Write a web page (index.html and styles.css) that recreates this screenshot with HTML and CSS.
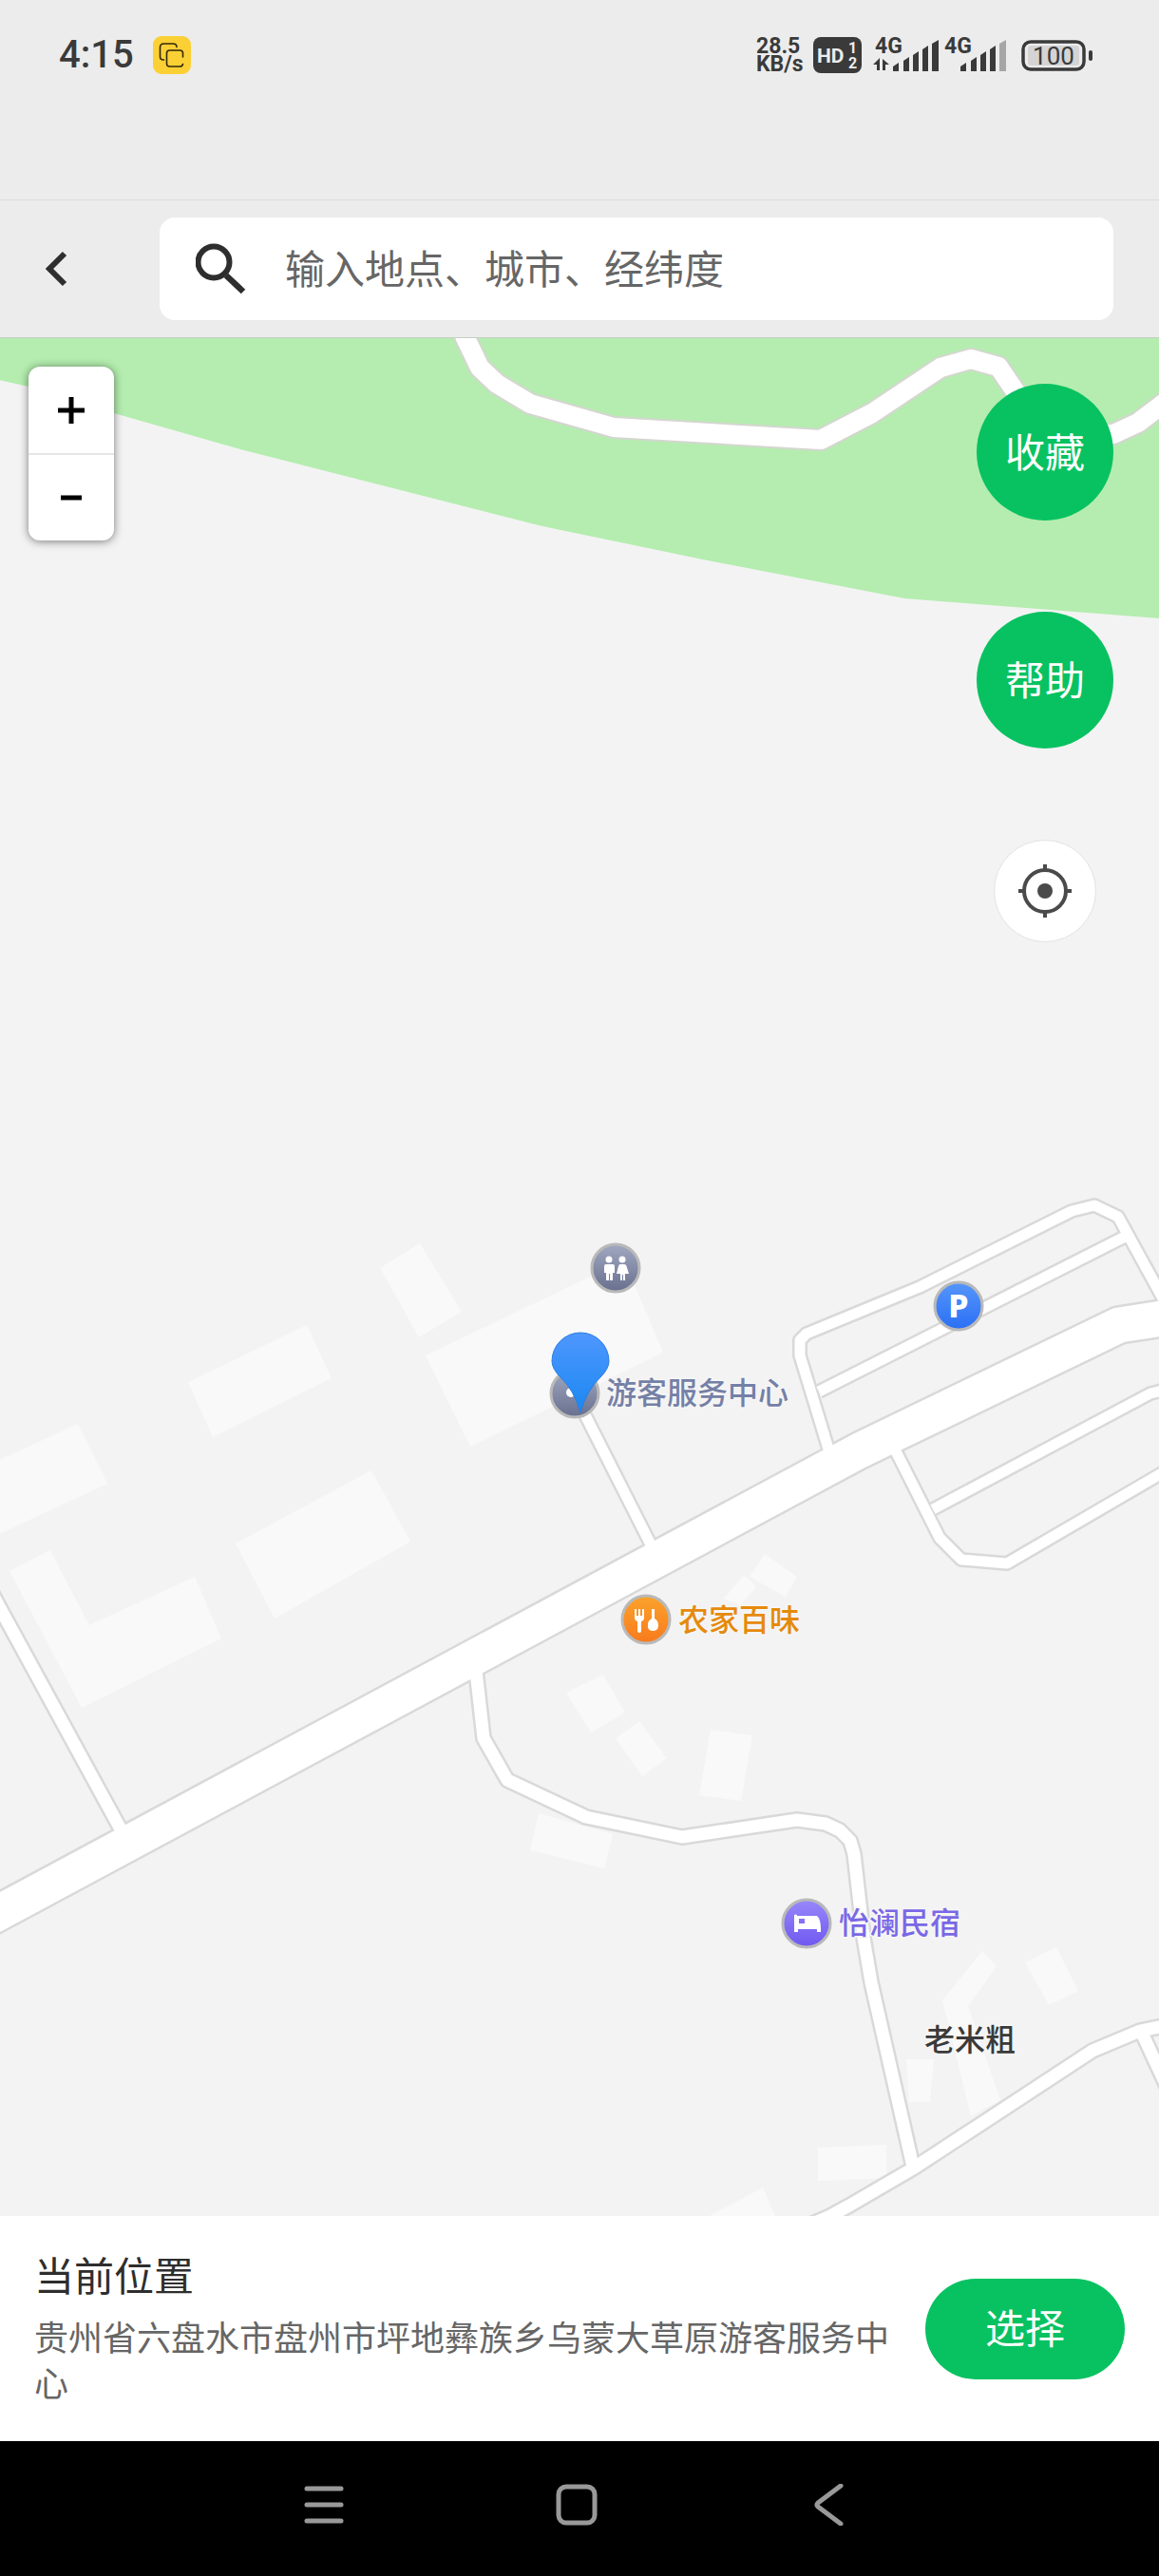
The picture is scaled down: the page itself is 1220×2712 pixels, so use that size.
FILE: index.html
```html
<!DOCTYPE html>
<html lang="zh-CN">
<head>
<meta charset="utf-8">
<meta name="viewport" content="width=device-width, initial-scale=1">
<title>选择位置</title>
<link rel="stylesheet" href="styles.css">
</head>
<body>
<div class="screen">
  <div class="status-bar">
    <div class="status-left">
      <span class="clock">4:15</span>
      <svg class="copy-badge" width="40" height="40" viewBox="0 0 40 40" aria-hidden="true">
        <rect width="40" height="40" rx="9" fill="#fbd034"/>
        <g fill="none" stroke="#33290a" stroke-width="1.6" stroke-linecap="round">
          <path d="M11.500 25H11q-3.500 0-3.500-3.500V12q0-4 4-4h9.500q4 0 4 3.500"/>
          <path d="M31.500 22V18q0-3-3-3H17.500q-3 0-3 3v11q0 3 3 3h11q2.500 0 3-2.500"/>
        </g>
      </svg>
    </div>
    <div class="status-right">
      <div class="speed"><span>28.5</span><span>KB/s</span></div>
      <svg class="hd" width="51" height="38" viewBox="0 0 51 38">
        <rect width="51" height="38" rx="8" fill="#3a3a3a"/>
        <text x="4" y="27" font-size="21">HD</text>
        <text x="37" y="17" font-size="16">1</text>
        <text x="37" y="33" font-size="16">2</text>
      </svg>
      <svg class="signal" width="69" height="48" viewBox="0 -5 69 48">
        <text x="2" y="17" font-size="23">4G</text>
        <path d="M0 29l7-7v13H4v-6zM17 29l-7-6v12h3v-6z"/>
        <path d="M21 36v-5l6-4v9zM32 36V25l6-4v15zM42 36V19l6-4v21zM52 36V13l6-4v27zM62 36V7l7-4v33z"/>
      </svg>
      <svg class="signal" width="65" height="48" viewBox="0 -5 65 48">
        <text x="0" y="17" font-size="23">4G</text>
        <path d="M17 36v-5l6-4v9zM28 36V25l6-4v15zM38 36V19l6-4v21zM48 36V13l6-4v27z"/>
        <path class="weak" d="M58 36V7l7-4v33z"/>
      </svg>
      <svg class="battery" width="75" height="34" viewBox="0 0 75 34">
        <rect x="2" y="3" width="64" height="29" rx="8" fill="none" stroke="#3a3a3a" stroke-width="3.500"/>
        <rect x="7" y="7" width="54" height="21" rx="3" fill="#d4d4d4"/>
        <rect x="71" y="12" width="4" height="11" rx="2"/>
        <text x="34" y="27" font-size="26" text-anchor="middle">100</text>
      </svg>
    </div>
  </div>

  <header class="search-bar">
    <button class="back" type="button" aria-label="返回">
      <svg width="24" height="38" viewBox="0 0 24 38"><path d="M20 3L4 19l16 16" fill="none" stroke="#2e2e2e" stroke-width="6"/></svg>
    </button>
    <label class="search">
      <svg width="54" height="54" viewBox="0 0 54 54" aria-hidden="true"><g fill="none" stroke="#2e2e2e"><circle cx="19" cy="20" r="16.500" stroke-width="6"/><path d="M32 34l18 17" stroke-width="6.500"/></g></svg>
      <input type="search" placeholder="输入地点、城市、经纬度" aria-label="搜索地点">
    </label>
  </header>

  <main class="map">
    <svg class="map-canvas" viewBox="0 356 1220 1977" preserveAspectRatio="xMidYMid slice">
      <defs>
        <linearGradient id="slate" x2="0" y2="1"><stop offset="0" stop-color="#a1a8c0"/><stop offset="1" stop-color="#68708f"/></linearGradient>
        <linearGradient id="blue" x2="0" y2="1"><stop offset="0" stop-color="#5596fa"/><stop offset="1" stop-color="#2b6ff5"/></linearGradient>
        <linearGradient id="orange" x2="0" y2="1"><stop offset="0" stop-color="#fba32c"/><stop offset="1" stop-color="#f87a1c"/></linearGradient>
        <linearGradient id="violet" x2="0" y2="1"><stop offset="0" stop-color="#9788fa"/><stop offset="1" stop-color="#6f58f0"/></linearGradient>
        <linearGradient id="pin" x2="0" y2="1"><stop offset="0" stop-color="#4f97ff"/><stop offset="1" stop-color="#1a88f0"/></linearGradient>
        <path id="main-road" d="M-30 2029L905 1527L1178 1395L1250 1384"/>
        <g id="lanes">
          <path d="M606 1470L692 1640"/>
          <path d="M878 1545L842 1427V1411L849 1404L968 1355L1128 1275L1152 1269L1177 1281L1240 1396"/>
          <path d="M862 1465L1184 1302"/>
          <path d="M938 1518L989 1619L1012 1642L1060 1646L1240 1541"/>
          <path d="M982 1589L1211 1467L1240 1460"/>
        </g>
        <g id="streets">
          <path d="M-20 1656L0 1693L132 1935"/>
          <path d="M500 1750L509 1830L534 1874L617 1913L718 1934L839 1916L869 1920L884 1927L895 1938L899 1952L909 2040L917 2087L961 2281"/>
          <path d="M830 2352L874 2333L894 2322L961 2283L1150 2159L1200 2138L1240 2130"/>
          <path d="M1201 2138L1240 2222"/>
        </g>
        <path id="park-road" d="M484 340L490 356L505 387L523 404L558 425L646 450L864 463L918 435L990 387L1022 378L1051 386L1068 411L1090 440L1130 460L1172 457L1198 445L1240 413"/>
      </defs>
      <path class="park" d="M-10 340V398L30 407L120 435L253 473L571 554L740 589L952 630L1220 651L1240 652V340z"/>
      <use href="#park-road" class="park-casing"/>
      <use href="#park-road" class="park-fill"/>
      <g class="buildings">
        <path d="M448 1427L657 1327L698 1424L495 1523z"/>
        <path d="M400 1335L442 1309L486 1381L441 1408z"/>
        <path d="M198 1455L323 1395L349 1451L224 1513z"/>
        <path d="M-20 1546L82 1499L113 1562L-20 1624z"/>
        <path d="M248 1625L391 1548L432 1623L289 1704z"/>
        <path d="M10 1654L53 1632L94 1711L205 1660L233 1725L86 1798z"/>
        <path d="M805 1636L839 1660L827 1681L789 1660z"/>
        <path d="M783 1658L796 1670L780 1690L762 1683z"/>
        <path d="M596 1782L635 1763L658 1803L622 1824z"/>
        <path d="M648 1830L673 1812L702 1851L676 1870z"/>
        <path d="M748 1821L792 1827L780 1896L736 1890z"/>
        <path d="M567 1909L645 1931L636 1967L558 1948z"/>
        <path d="M1079 2066L1112 2050L1135 2096L1104 2111z"/>
        <path d="M1034 2054L1049 2070L1019 2112L1053 2211L1022 2228L992 2106z"/>
        <path d="M954 2168H983L979 2213H957z"/>
        <path d="M861 2261L933 2258V2293L861 2296z"/>
        <path d="M730 2342L803 2303L820 2342z"/>
      </g>
      <g class="casing">
        <use href="#lanes" stroke-width="16"/>
        <use href="#streets" stroke-width="18"/>
        <use href="#main-road" stroke-width="42"/>
      </g>
      <g class="fill">
        <use href="#lanes" stroke-width="11"/>
        <use href="#streets" stroke-width="13"/>
        <use href="#main-road" stroke-width="37"/>
      </g>

      <g class="poi">
        <circle cx="648" cy="1335" r="25" fill="url(#slate)"/>
        <g fill="#fff">
          <circle cx="641" cy="1326" r="3.500"/><circle cx="655" cy="1326" r="3.500"/>
          <path d="M638 1331h7q2 0 2 2v7h-2v8h-3v-7h-1v7h-3v-8h-2v-7q0-2 2-2zM653 1331h4q2 0 2.500 2l2.500 8h-4v7h-2v-6h-1v6h-2v-7h-4l2-8q.5-2 2-2z"/>
        </g>
        <circle cx="1009" cy="1375" r="25" fill="url(#blue)"/>
        <text class="poi-letter" x="1009" y="1387" text-anchor="middle">P</text>
        <circle cx="605" cy="1467" r="25" fill="url(#slate)"/>
        <circle cx="601" cy="1466" r="5" fill="#fff"/>
        <circle cx="680" cy="1705" r="25" fill="url(#orange)"/>
        <path fill="#fff" d="M668 1694h2v7h2v-7h2v7h2v-7h2v9q0 3-3 4v10q0 2-2 2t-2-2v-10q-3-1-3-4zM686 1694h3v10q4 2 4 7 0 6-6 6t-5-7q0-4 4-6z"/>
        <circle cx="849" cy="2025" r="25" fill="url(#violet)"/>
        <path fill="#fff" fill-rule="evenodd" d="M836 2016q1.500-1 3 0v1h21q4 3 4 14v3h-4v-3h-20v3h-4zM841 2020v5h6v-5z"/>
      </g>
      <path class="pin" d="M611 1487Q604 1463 590 1450Q581 1441 581 1433A30 30 0 0 1 641 1433Q641 1441 632 1450Q618 1463 611 1487z"/>
      <g class="labels">
        <text x="638" y="1478" fill="#7580a6">游客服务中心</text>
        <text x="714" y="1717" fill="#e58a0c">农家百味</text>
        <text x="883" y="2036" fill="#7a68e6">怡澜民宿</text>
        <text x="973" y="2159" fill="#3a3a3a">老米粗</text>
      </g>
    </svg>

    <div class="zoom-control">
      <button type="button" aria-label="放大"><svg width="28" height="28" viewBox="0 0 28 28"><path d="M0 14h28M14 0v28" stroke="#000" stroke-width="5"/></svg></button>
      <button type="button" aria-label="缩小"><svg width="28" height="28" viewBox="0 0 28 28"><path d="M3 14h22" stroke="#000" stroke-width="5"/></svg></button>
    </div>
    <div class="map-actions">
      <button class="round" type="button">收藏</button>
      <button class="round" type="button">帮助</button>
      <button class="locate" type="button" aria-label="定位">
        <svg width="56" height="56" viewBox="0 0 56 56"><g fill="none" stroke="#4a4a4a" stroke-width="4"><circle cx="28" cy="28" r="22"/><path d="M28 0v8M28 48v8M0 28h8M48 28h8"/></g><circle cx="28" cy="28" r="8" fill="#4a4a4a"/></svg>
      </button>
    </div>
  </main>

  <section class="place">
    <div class="place-text">
      <h1>当前位置</h1>
      <p>贵州省六盘水市盘州市坪地彝族乡乌蒙大草原游客服务中心</p>
    </div>
    <button class="choose" type="button">选择</button>
  </section>

  <nav class="system-nav">
    <button type="button" aria-label="最近任务"><svg width="44" height="44" viewBox="0 0 44 44"><path d="M4 5h36M4 22h36M4 39h36"/></svg></button>
    <button type="button" aria-label="主屏幕"><svg width="44" height="44" viewBox="0 0 44 44"><rect x="3" y="3" width="38" height="38" rx="8"/></svg></button>
    <button type="button" aria-label="返回上一级"><svg width="44" height="44" viewBox="0 0 44 44"><path d="M34 2L10 20q-2 2 0 4l24 18"/></svg></button>
  </nav>
</div>
</body>
</html>
```

FILE: styles.css
```css
* {
  box-sizing: border-box;
}

body {
  margin: 0;
  font-family: "Noto Sans", "Noto Sans CJK SC", sans-serif;
  color: #2e2e2e;
  background: #ececec;
}

button {
  display: flex;
  align-items: center;
  justify-content: center;
  margin: 0;
  padding: 0;
  border: 0;
  background: none;
  font-family: inherit;
  cursor: pointer;
}

svg {
  display: block;
}

.screen {
  display: flex;
  flex-direction: column;
  min-height: 100vh;
}

/* Phone status bar */
.status-bar {
  display: flex;
  justify-content: space-between;
  align-items: center;
  padding: 30px 70px 124px 62px;
  border-bottom: 1px solid #dcdcdc;
  background: #ececec;
  color: #3a3a3a;
  fill: #3a3a3a;
  font-family: Roboto, "Noto Sans", sans-serif;
}

.status-left {
  display: flex;
  align-items: center;
  gap: 20px;
}

.clock {
  font-size: 40px;
  line-height: 56px;
  font-weight: 500;
}

.status-right {
  display: flex;
  align-items: center;
}

.speed {
  display: flex;
  flex-direction: column;
  width: 52px;
  font-size: 23px;
  line-height: 19px;
  font-weight: 700;
}

.hd {
  margin-left: 8px;
  font-weight: 700;
}

.hd text {
  fill: #ececec;
}

.signal {
  margin-left: 12px;
  font-weight: 700;
}

.signal + .signal {
  margin-left: 6px;
}

.weak {
  fill: #a6a6a6;
}

.battery {
  margin-left: 16px;
}

/* Search */
.search-bar {
  display: flex;
  align-items: center;
  padding: 18px 48px 18px 0;
  border-bottom: 1px solid #c4cfc4;
  background: #ececec;
}

.back {
  width: 120px;
  height: 108px;
  margin-right: 48px;
}

.search {
  display: flex;
  flex: 1;
  align-items: center;
  gap: 40px;
  height: 108px;
  padding: 0 40px 0 38px;
  border-radius: 16px;
  background: #fff;
}

.search input {
  flex: 1;
  min-width: 0;
  padding: 0;
  border: 0;
  outline: 0;
  background: none;
  font-family: inherit;
  font-size: 42px;
  line-height: 60px;
  color: #2e2e2e;
}

.search input::placeholder {
  color: #666;
  opacity: 1;
}

/* Map */
.map {
  position: relative;
  flex: 1;
  min-height: 900px;
  overflow: hidden;
  background: #f3f3f3;
}

.map-canvas {
  position: absolute;
  inset: 0;
  width: 100%;
  height: 100%;
}

.park {
  fill: #b4edaf;
}

.park-casing,
.park-fill,
.casing,
.fill {
  fill: none;
  stroke-linejoin: round;
}

.park-casing {
  stroke: #d5d6d0;
  stroke-width: 24px;
}

.park-fill {
  stroke: #fff;
  stroke-width: 20px;
}

.casing {
  stroke: #d9d9d9;
}

.fill {
  stroke: #fff;
}

.buildings {
  fill: #f9f9f9;
}

.poi > circle[r="25"] {
  stroke: #b9b9b9;
  stroke-width: 3px;
}

.poi-letter {
  font-size: 34px;
  font-weight: 800;
  fill: #fff;
}

.pin {
  fill: url(#pin);
  stroke: #2b7de0;
  stroke-width: 1px;
}

.labels {
  font-size: 32px;
  font-weight: 500;
  stroke: #f6f6f6;
  stroke-width: 3px;
  paint-order: stroke;
}

.zoom-control {
  position: absolute;
  top: 30px;
  left: 30px;
  width: 90px;
  overflow: hidden;
  border-radius: 12px;
  background: #fff;
  box-shadow: 0 1px 10px rgba(0, 0, 0, 0.5);
}

.zoom-control button {
  width: 100%;
  height: 91px;
}

.zoom-control button + button {
  border-top: 2px solid #e6e6e6;
  height: 92px;
}

.map-actions {
  position: absolute;
  top: 48px;
  right: 48px;
  display: flex;
  flex-direction: column;
  align-items: center;
  gap: 96px;
}

.round {
  width: 144px;
  height: 144px;
  padding-bottom: 6px;
  border-radius: 50%;
  background: #08c261;
  color: #fff;
  font-size: 42px;
}

.locate {
  width: 108px;
  height: 108px;
  border: 1px solid #e2e2e2;
  border-radius: 50%;
  background: #fff;
}

/* Current place */
.place {
  display: flex;
  align-items: center;
  gap: 36px;
  padding: 36px;
  background: #fff;
}

.place-text {
  flex: 1;
}

.place h1 {
  margin: 0 0 15px;
  font-size: 42px;
  line-height: 54px;
  font-weight: 400;
}

.place p {
  margin: 0;
  font-size: 36px;
  line-height: 48px;
  color: #666;
}

.choose {
  width: 210px;
  height: 106px;
  padding-bottom: 6px;
  border-radius: 53px;
  background: #08c261;
  color: #fff;
  font-size: 42px;
}

/* Phone navigation */
.system-nav {
  display: flex;
  justify-content: center;
  gap: 186px;
  padding: 27px 7px 35px 0;
  background: #000;
}

.system-nav button {
  width: 80px;
  height: 80px;
}

.system-nav svg {
  fill: none;
  stroke: #999;
  stroke-width: 5px;
  stroke-linecap: round;
  stroke-linejoin: round;
}
```
